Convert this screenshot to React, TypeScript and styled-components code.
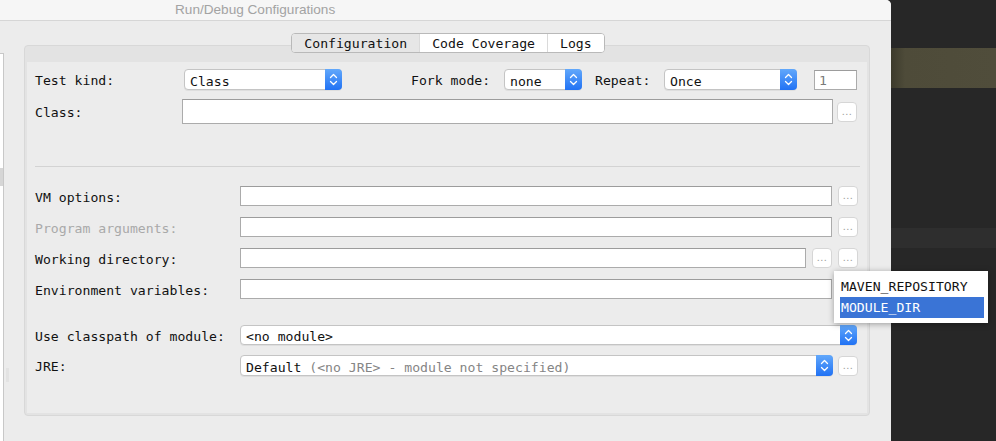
import React from "react";
import styled, { createGlobalStyle } from "styled-components";

const Global = createGlobalStyle`
  html, body { margin: 0; padding: 0; }
  body { width: 996px; height: 441px; overflow: hidden; background: #262626; }
  * { box-sizing: border-box; }
`;

const Screen = styled.div`
  display: flex;
  width: 996px;
  height: 441px;
`;

const Window = styled.div`
  width: 891px;
  height: 441px;
  display: flex;
  flex-direction: column;
  background: #ececec;
  border-top-right-radius: 5px;
`;

const TitleBar = styled.div`
  height: 21px;
  flex: none;
  background: #f6f6f6;
  border-bottom: 1px solid #d6d6d6;
  border-top-right-radius: 5px;
  padding-left: 175px;
  font-family: "Liberation Sans", Arial, sans-serif;
  font-size: 13.6px;
  line-height: 20px;
  color: #a3a3a3;
`;

const WindowBody = styled.div`
  flex: 1;
  display: flex;
`;

const LeftPanel = styled.div`
  width: 4px;
  margin-top: 32px;
  background: #fff;
  border-top: 1px solid #c8c8c8;
  border-right: 1px solid #c8c8c8;
  display: flex;
  flex-direction: column;
`;

const ListSelection = styled.div`
  margin-top: 114px;
  height: 18px;
  width: 3px;
  background: #d6d6d6;
`;

const Splitter = styled.div`
  width: 6px;
  display: flex;
  flex-direction: column;
  padding-left: 2px;
`;

const Grip = styled.div`
  margin-top: 347px;
  width: 3px;
  height: 14px;
  background-image: radial-gradient(circle, #d2d2d2 0.4px, transparent 0.6px);
  background-size: 1.5px 1.5px;
`;

const Main = styled.div`
  flex: 1;
  display: flex;
  flex-direction: column;
  padding: 12px 21px 0 14px;
`;

const Tabs = styled.div`
  position: relative;
  z-index: 1;
  display: flex;
  justify-content: center;
  margin-bottom: -8px;
  padding-left: 2px;
`;

const TabGroup = styled.div`
  display: flex;
  height: 20px;
  border: 1px solid #b9b9b9;
  border-radius: 4px;
  overflow: hidden;
  background: #fff;
`;

const Tab = styled.div<{ $active?: boolean }>`
  padding: 1px 12px 0 12px;
  font-family: "DejaVu Sans Mono", monospace;
  font-size: 13.15px;
  line-height: 18px;
  color: #111;
  background: ${(p) => (p.$active ? "#e6e6e6" : "#fff")};
  & + & {
    border-left: 1px solid #dadada;
  }
`;

const Pane = styled.div`
  height: 371px;
  background: #e3e3e3;
  border: 1px solid #d8d8d8;
  border-radius: 4px;
  padding: 16px 2px 2px 2px;
  display: flex;
`;

const PaneContent = styled.div`
  flex: 1;
  background: #ececec;
  padding: 7px 9px 0 8px;
  display: flex;
  flex-direction: column;
  font-family: "DejaVu Sans Mono", monospace;
  font-size: 13.15px;
  color: #111;
`;

const Row = styled.div<{ $top?: number; $h?: number }>`
  position: relative;
  display: flex;
  align-items: center;
  margin-top: ${(p) => p.$top ?? 0}px;
  height: ${(p) => p.$h ?? 20}px;
`;

const Label = styled.div<{ $w: number; $ml?: number; $muted?: boolean }>`
  flex: none;
  width: ${(p) => p.$w}px;
  margin-left: ${(p) => p.$ml ?? 0}px;
  padding-top: 2px;
  color: ${(p) => (p.$muted ? "#a9a9a9" : "#111")};
  white-space: nowrap;
`;

const SelectBox = styled.div<{ $w: number; $h?: number }>`
  flex: none;
  width: ${(p) => p.$w}px;
  height: ${(p) => p.$h ?? 21}px;
  display: flex;
  background: #fff;
  border: 1px solid #c4c4c4;
  border-radius: 4px;
  box-shadow: 0 1px 0 rgba(0, 0, 0, 0.06);
`;

const SelectText = styled.div`
  flex: 1;
  padding: 3px 0 0 5px;
  display: flex;
  align-items: center;
  white-space: nowrap;
  overflow: hidden;
  color: #111;
`;

const Hint = styled.span`
  color: #858585;
`;

const Stepper = styled.div`
  flex: none;
  width: 17px;
  margin: -1px -1px -1px 0;
  border-radius: 0 4px 4px 0;
  background: linear-gradient(#62a8fb, #2172f4);
  display: flex;
  align-items: center;
  justify-content: center;
`;

const Field = styled.div<{ $w: number; $h?: number; $ml?: number }>`
  flex: none;
  width: ${(p) => p.$w}px;
  height: ${(p) => p.$h ?? 20}px;
  margin-left: ${(p) => p.$ml ?? 0}px;
  background: #fff;
  border: 1px solid #ababab;
  border-top-color: #9c9c9c;
  padding: 2px 0 0 4px;
  display: flex;
  align-items: center;
  color: #7a7a7a;
`;

const BrowseButton = styled.div<{ $ml?: number }>`
  flex: none;
  width: 20px;
  height: 20px;
  margin-left: ${(p) => p.$ml ?? 6}px;
  background: #fff;
  border: 1px solid #d6d6d6;
  border-radius: 4px;
  color: #a0a0a0;
  font-family: "Liberation Sans", Arial, sans-serif;
  font-size: 11px;
  letter-spacing: 0.5px;
  line-height: 1;
  display: flex;
  align-items: flex-end;
  justify-content: center;
  padding-bottom: 4px;
`;

const Separator = styled.div`
  margin-top: 42px;
  margin-right: -2px;
  height: 1px;
  background: #d3d3d3;
`;

const Popup = styled.div`
  position: absolute;
  left: 799px;
  top: -8px;
  width: 154px;
  height: 52px;
  background: #fff;
  box-shadow: 0 1px 6px rgba(0, 0, 0, 0.35);
  padding: 5px 4px 5px 6px;
  display: flex;
  flex-direction: column;
  z-index: 2;
`;

const PopupItem = styled.div<{ $selected?: boolean }>`
  height: 21px;
  line-height: 22px;
  padding-left: 1px;
  white-space: nowrap;
  color: ${(p) => (p.$selected ? "#fff" : "#111")};
  background: ${(p) => (p.$selected ? "#3a74d6" : "transparent")};
`;

const Editor = styled.div`
  flex: 1;
  background: #272727;
  display: flex;
  flex-direction: column;
`;

const EditorBand = styled.div<{ $top: number; $h: number; $bg: string }>`
  margin-top: ${(p) => p.$top}px;
  height: ${(p) => p.$h}px;
  background: ${(p) => p.$bg};
`;

const Chevrons = () => (
  <svg width="9" height="13" viewBox="0 0 9 13" fill="none">
    <path d="M1.5 4.5 L4.5 1.5 L7.5 4.5" stroke="#fff" strokeWidth="1.3" strokeLinecap="round" strokeLinejoin="round" />
    <path d="M1.5 8.5 L4.5 11.5 L7.5 8.5" stroke="#fff" strokeWidth="1.3" strokeLinecap="round" strokeLinejoin="round" />
  </svg>
);

const Select = ({ w, h, children }: { w: number; h?: number; children: React.ReactNode }) => (
  <SelectBox $w={w} $h={h}>
    <SelectText>{children}</SelectText>
    <Stepper>
      <Chevrons />
    </Stepper>
  </SelectBox>
);

const Browse = ({ ml }: { ml?: number }) => <BrowseButton $ml={ml}>...</BrowseButton>;

export default function App() {
  return (
    <Screen>
      <Global />
      <Window>
        <TitleBar>Run/Debug Configurations</TitleBar>
        <WindowBody>
          <LeftPanel>
            <ListSelection />
          </LeftPanel>
          <Splitter>
            <Grip />
          </Splitter>
          <Main>
            <Tabs>
              <TabGroup>
                <Tab $active>Configuration</Tab>
                <Tab>Code Coverage</Tab>
                <Tab>Logs</Tab>
              </TabGroup>
            </Tabs>
            <Pane>
              <PaneContent>
                <Row $h={21}>
                  <Label $w={149}>Test kind:</Label>
                  <Select w={158}>Class</Select>
                  <Label $w={93} $ml={69}>Fork mode:</Label>
                  <Select w={78}>none</Select>
                  <Label $w={69} $ml={13}>Repeat:</Label>
                  <Select w={133}>Once</Select>
                  <Field $w={43} $ml={17}>1</Field>
                </Row>
                <Row $top={9} $h={25}>
                  <Label $w={147}>Class:</Label>
                  <Field $w={651} $h={25} />
                  <Browse ml={4} />
                </Row>
                <Separator />
                <Row $top={19}>
                  <Label $w={205}>VM options:</Label>
                  <Field $w={592} />
                  <Browse />
                </Row>
                <Row $top={11}>
                  <Label $w={205} $muted>Program arguments:</Label>
                  <Field $w={592} />
                  <Browse />
                </Row>
                <Row $top={11}>
                  <Label $w={205}>Working directory:</Label>
                  <Field $w={566} />
                  <Browse />
                  <Browse />
                </Row>
                <Row $top={11}>
                  <Label $w={205}>Environment variables:</Label>
                  <Field $w={592} />
                  <Popup>
                    <PopupItem>MAVEN_REPOSITORY</PopupItem>
                    <PopupItem $selected>MODULE_DIR</PopupItem>
                  </Popup>
                </Row>
                <Row $top={26}>
                  <Label $w={205}>Use classpath of module:</Label>
                  <Select w={617} h={20}>&lt;no module&gt;</Select>
                </Row>
                <Row $top={10} $h={21}>
                  <Label $w={205}>JRE:</Label>
                  <Select w={593}>
                    Default&nbsp;<Hint>(&lt;no JRE&gt; - module not specified)</Hint>
                  </Select>
                  <Browse ml={5} />
                </Row>
              </PaneContent>
            </Pane>
          </Main>
        </WindowBody>
      </Window>
      <Editor>
        <EditorBand $top={48} $h={40} $bg="linear-gradient(to right, #3c3a2c 0px, #4e4b39 14px, #504d3b 100%)" />
        <EditorBand $top={140} $h={20} $bg="#2e2e2e" />
      </Editor>
    </Screen>
  );
}
